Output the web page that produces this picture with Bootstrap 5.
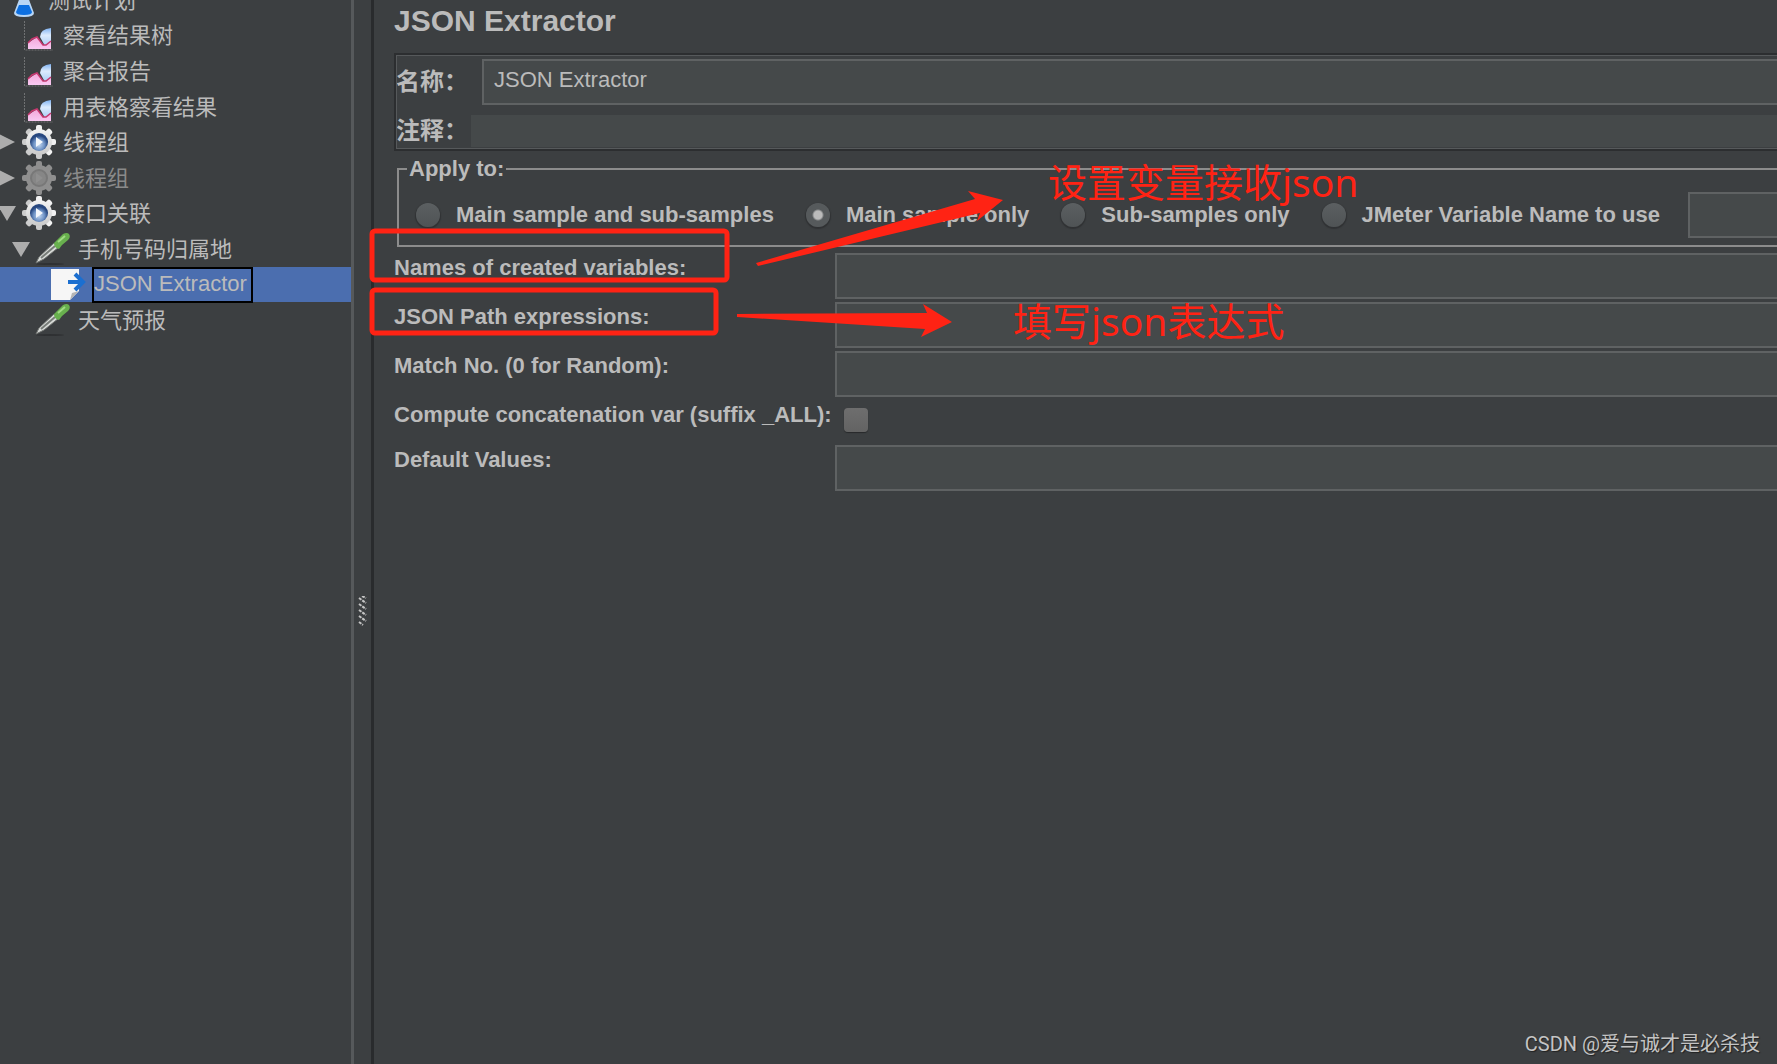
<!DOCTYPE html>
<html lang="zh-CN">
<head>
<meta charset="utf-8">
<meta name="viewport" content="width=device-width, initial-scale=1">
<title>JSON Extractor</title>
<link href="https://cdn.jsdelivr.net/npm/bootstrap@5.3.0/dist/css/bootstrap.min.css" rel="stylesheet">
<style>
  body { background:#3c3f41; color:#bbb; font:22px/26px "Liberation Sans","Noto Sans CJK SC",sans-serif; }
  a, a:hover { color:inherit; text-decoration:none; }
  .app-shell { min-height:100vh; overflow:hidden; }
  .side { width:351px; flex:none; overflow:hidden; }
  .tree { height:356px; margin-top:-18px; }
  .tree-row { position:relative; flex:1 1 0; min-height:0; padding-left:22px; }
  .tree-row svg { flex:none; }
  .tree-row a { padding-top:2px; }
  .tree-row .caret { position:absolute; left:-2px; fill:#adadad; }
  .lvl-report { padding-left:22px; }
  .lvl-plan { padding-left:10px; }
  .lvl-plan a { margin-left:10px; }
  .lvl-report a, .lvl-group a { margin-left:7px; }
  .lvl-sample { padding-left:34px; }
  .lvl-sample .caret { left:12px; }
  .lvl-sample a { margin-left:6px; }
  .lvl-leaf { padding-left:50px; background:#4b6eaf; }
  .lvl-leaf a { margin-left:5px; padding:0 4px 2px 0; border:2px solid #000; line-height:30px; }
  .dimmed { color:#8a8a8a; }
  .split-bar { width:23px; flex:none; padding-top:157px; border-left:3px solid #56595b; border-right:3px solid #292b2d; cursor:col-resize; }
  .main-pane { padding:4px 0 0 20px; overflow:hidden; }
  .pane-title { font-size:30px; line-height:34px; font-weight:700; margin-bottom:15px; }
  .id-box { border:2px solid #2c2e30; border-right:0; outline:1px solid #56595b; outline-offset:-3px; padding:4px 0 2px 0; margin-right:-6px; }
  .id-box label { font-size:24px; font-weight:700; line-height:32px; }
  .id-name label { width:86px; } .id-note label { width:75px; }
  .field { flex:1 1 0; min-width:0; height:46px; background:#45494a; border:2px solid #5f6263; border-right:0; color:#bbb; padding:0 10px 4px; outline:0; }
  .id-note { margin-top:10px; }
  .id-note .field { height:32px; border:0; }
  .apply { margin:5px 0 0 3px; border:2px solid #8c8c8c; border-right:0; padding:16px 0 4px 17px; height:91px; min-width:0; }
  .apply legend { float:none; width:auto; font-size:22px; line-height:26px; font-weight:700; margin:0 0 0 -9px; padding:0 2px; }
  .apply label { font-weight:700; white-space:nowrap; margin:0 32px 0 16px; }
  .apply label.last { margin-right:28px; }
  .apply .opts { margin-top:-6px; }
  .form-check-input.dot, .form-check-input.box { flex:none; width:24px; height:24px; margin:0; border:0; background-color:transparent; background-image:linear-gradient(#5b5f61,#4f5355); box-shadow:0 1px 1px 1px #303234; }
  .form-check-input.dot:checked { background-image:radial-gradient(circle,#bbb 4px,#565a5c 6px); }
  .form-check-input.box { background-image:linear-gradient(#6e6e6e,#636363); border-radius:4px; margin:8px 0 0 9px; box-shadow:0 1px 1px #27292b; }
  .params { display:grid; grid-template-columns:441px 1fr; row-gap:3px; margin-top:6px; }
  .params label { font-weight:700; white-space:nowrap; padding-top:2px; }
  .params .short { height:42px; }
  .note-layer { position:absolute; inset:0; width:100%; height:100%; pointer-events:none; overflow:hidden; }
  .note-layer svg { position:absolute; left:0; top:0; }
  .red-note { position:absolute; color:#ff2314; font:39px/48px "Noto Sans","Noto Sans CJK SC",sans-serif; white-space:nowrap; }
  .note-one { left:1048px; top:158px; } .note-two { left:1013px; top:297px; }
  .watermark { position:absolute; right:17px; bottom:7px; font:20px/26px Roboto,"Noto Sans CJK SC",sans-serif; color:#c4c4c4; text-shadow:1px 1px 1px #222; }
</style>
<script src="https://cdn.jsdelivr.net/npm/bootstrap@5.3.0/dist/js/bootstrap.bundle.min.js"></script>
</head>
<body>
<svg width="0" height="0" class="position-absolute" aria-hidden="true">
  <defs>
    <linearGradient id="gBlue" x1="0" y1="0" x2="0" y2="1"><stop offset="0" stop-color="#7fb2f2"/><stop offset=".4" stop-color="#dcebfd"/><stop offset="1" stop-color="#a9ccf5"/></linearGradient>
    <linearGradient id="gPink" x1="0" y1="0" x2="0" y2="1"><stop offset="0" stop-color="#f3a6d8"/><stop offset="1" stop-color="#f9c9f2"/></linearGradient>
    <radialGradient id="gOrb" cx=".5" cy=".65"><stop offset="0" stop-color="#c4d8f0"/><stop offset=".6" stop-color="#6f93c6"/><stop offset="1" stop-color="#27477f"/></radialGradient>
    <linearGradient id="gGear" x1="0" y1="0" x2="0" y2="1"><stop offset="0" stop-color="#f4f4f4"/><stop offset="1" stop-color="#c9c9c9"/></linearGradient>
    <symbol id="chart" viewBox="0 0 32 34"><path d="M1.500 3v29H30" fill="none" stroke="#707273" stroke-dasharray="2 1"/><path d="M17 19Q17 11 28 10V24L22 28Z" fill="url(#gBlue)"/><path d="M5 25L14 19L20 27L23 27L28 23V31H5Z" fill="url(#gPink)"/><path d="M5 25L9 21L14 19L20 27L23 27L28 23" fill="none" stroke="#c6386f" stroke-width="1.500"/></symbol>
    <symbol id="teeth" viewBox="0 0 34 34"><g><rect x="14" y="0" width="6" height="34" rx="2"/><rect x="14" y="0" width="6" height="34" rx="2" transform="rotate(45 17 17)"/><rect x="14" y="0" width="6" height="34" rx="2" transform="rotate(90 17 17)"/><rect x="14" y="0" width="6" height="34" rx="2" transform="rotate(135 17 17)"/><circle cx="17" cy="17" r="13"/></g></symbol>
    <symbol id="gear" viewBox="0 0 34 34"><use href="#teeth" fill="url(#gGear)"/><circle cx="17" cy="17" r="9" fill="url(#gOrb)"/><path d="M14 12L21 17L14 22Z" fill="#f3f7fc"/></symbol>
    <symbol id="gearOff" viewBox="0 0 34 34"><use href="#teeth" fill="#8f8f8f"/><circle cx="17" cy="17" r="8" fill="#868686" stroke="#787878" stroke-width="2"/><path d="M14 12L21 17L14 22Z" fill="#8f8f8f"/></symbol>
    <symbol id="dropper" viewBox="0 0 38 34"><ellipse cx="16" cy="32" rx="14" ry="1" fill="#2f3133"/><path d="M2 31L5 25L20 11L25 15L10 27Z" fill="#d9dcd9" stroke="#6f7270"/><path d="M7 26L21 14" stroke="#777c78" stroke-width="2"/><path d="M20 11L23 8L29 2Q33 0 35 2Q37 5 34 8L28 13L25 17Q20 16 20 11Z" fill="#68b04e"/><path d="M24 10L31 4" stroke="#a1dc84" stroke-width="2"/></symbol>
  </defs>
</svg>
<div class="app-shell d-flex position-relative">
  <nav class="side" aria-label="测试计划">
    <ul class="tree list-unstyled d-flex flex-column mb-0">
      <li class="tree-row lvl-plan d-flex align-items-center"><svg width="28" height="34" viewBox="0 0 28 34"><path d="M10 2H18V14L24 30Q24 34 14 34Q4 34 4 30L10 14Z" fill="#b9d6f5"/><path d="M9 22H19L22 29Q22 32 14 32Q6 32 6 29Z" fill="#0d6fe0"/></svg><a href="#">测试计划</a></li>
      <li class="tree-row lvl-report d-flex align-items-center"><svg width="34" height="34"><use href="#chart"/></svg><a href="#">察看结果树</a></li>
      <li class="tree-row lvl-report d-flex align-items-center"><svg width="34" height="34"><use href="#chart"/></svg><a href="#">聚合报告</a></li>
      <li class="tree-row lvl-report d-flex align-items-center"><svg width="34" height="34"><use href="#chart"/></svg><a href="#">用表格察看结果</a></li>
      <li class="tree-row lvl-group d-flex align-items-center"><svg class="caret" width="18" height="18"><path d="M1 1L17 9L1 17Z"/></svg><svg width="34" height="34"><use href="#gear"/></svg><a href="#">线程组</a></li>
      <li class="tree-row lvl-group dimmed d-flex align-items-center"><svg class="caret" width="18" height="18"><path d="M1 1L17 9L1 17Z"/></svg><svg width="34" height="34"><use href="#gearOff"/></svg><a href="#">线程组</a></li>
      <li class="tree-row lvl-group d-flex align-items-center"><svg class="caret" width="18" height="18"><path d="M0 2H18L9 17Z"/></svg><svg width="34" height="34"><use href="#gear"/></svg><a href="#">接口关联</a></li>
      <li class="tree-row lvl-sample d-flex align-items-center"><svg class="caret" width="18" height="18"><path d="M0 2H18L9 17Z"/></svg><svg width="38" height="34"><use href="#dropper"/></svg><a href="#">手机号码归属地</a></li>
      <li class="tree-row lvl-leaf d-flex align-items-center"><svg width="37" height="34" viewBox="0 0 37 34"><path d="M1 1H29V23L20 32H1Z" fill="#f6f6f6"/><path d="M20 32L22 25L29 23Z" fill="#b5b5b5"/><path d="M18 14H32M25 6L33 14L25 22" fill="none" stroke="#1b6fd0" stroke-width="4"/></svg><a href="#" aria-current="page">JSON Extractor</a></li>
      <li class="tree-row lvl-sample d-flex align-items-center"><svg width="38" height="34"><use href="#dropper"/></svg><a href="#">天气预报</a></li>
    </ul>
  </nav>
  <div class="split-bar d-flex align-items-center justify-content-center">
    <svg width="10" height="30" viewBox="0 0 10 30" stroke="#c4c4c4" stroke-width="2"><path d="M1 2L8 7M1 8L8 13M1 14L8 19M1 20L8 25M4 0L8 2M1 26L5 29" stroke-dasharray="3 1"/></svg>
  </div>
  <main class="main-pane flex-fill">
    <h1 class="pane-title">JSON Extractor</h1>
    <form>
      <div class="id-box">
        <div class="id-name d-flex align-items-center"><label for="nm">名称：</label><input id="nm" class="field" type="text" value="JSON Extractor"></div>
        <div class="id-note d-flex align-items-center"><label for="cm">注释：</label><input id="cm" class="field" type="text"></div>
      </div>
      <fieldset class="apply">
        <legend>Apply to:</legend>
        <div class="opts d-flex align-items-center">
          <input class="form-check-input dot" type="radio" name="scope" id="s1"><label for="s1">Main sample and sub-samples</label>
          <input class="form-check-input dot" type="radio" name="scope" id="s2" checked><label for="s2">Main sample only</label>
          <input class="form-check-input dot" type="radio" name="scope" id="s3"><label for="s3">Sub-samples only</label>
          <input class="form-check-input dot" type="radio" name="scope" id="s4"><label class="last" for="s4">JMeter Variable Name to use</label>
          <input class="field" type="text" aria-label="JMeter Variable Name">
        </div>
      </fieldset>
      <div class="params">
        <label for="p1">Names of created variables:</label><input id="p1" class="field" type="text">
        <label for="p2">JSON Path expressions:</label><input id="p2" class="field" type="text">
        <label for="p3">Match No. (0 for Random):</label><input id="p3" class="field" type="text">
        <label class="short" for="p4">Compute concatenation var (suffix _ALL):</label><input id="p4" class="form-check-input box" type="checkbox">
        <label for="p5">Default Values:</label><input id="p5" class="field" type="text">
      </div>
    </form>
  </main>
  <div class="note-layer">
    <svg width="1100" height="400" viewBox="0 0 1100 400" aria-hidden="true">
      <g fill="none" stroke="#ff2314" stroke-width="5"><rect x="372" y="231" width="355" height="49" rx="3"/><rect x="372" y="290" width="344" height="43" rx="3"/></g>
      <path d="M756 263L975 199L968 191L1003 200L977 221L980 213L758 266Z" fill="#ff2314"/>
      <path d="M737 314L927 313L923 304L952 322L921 337L925 329L737 317Z" fill="#ff2314"/>
    </svg>
    <div class="red-note note-one">设置变量接收json</div>
    <div class="red-note note-two">填写json表达式</div>
    <div class="watermark">CSDN @爱与诚才是必杀技</div>
  </div>
</div>
</body>
</html>
